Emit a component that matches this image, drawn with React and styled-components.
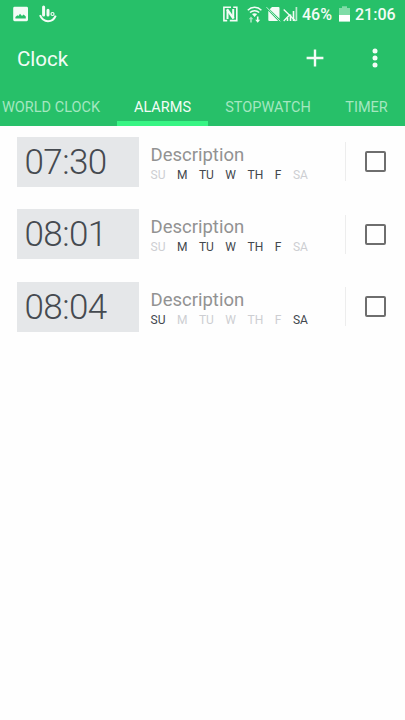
import styled, { createGlobalStyle } from "styled-components";

const GlobalStyle = createGlobalStyle`
  * {
    box-sizing: border-box;
  }

  body {
    margin: 0;
    background-color: #fefefe;
    font-family: Roboto, sans-serif;
  }
`;

const Screen = styled.div`
  width: 405px;
  height: 720px;
  overflow: hidden;
  background-color: #fefefe;
`;

const Header = styled.header`
  height: 125.5px;
  background-color: #27c069;
  color: #f3fcf6;
`;

const StatusBar = styled.div`
  display: flex;
  align-items: center;
  height: 28px;
  padding: 0 9px 0 13px;
`;

const StatusIcon = styled.svg`
  display: block;
  flex: none;
  margin-left: ${({ $gap }) => $gap || 0}px;
`;

const StatusText = styled.span`
  flex: none;
  width: ${({ $width }) => $width}px;
  margin-left: ${({ $gap }) => $gap}px;
  padding-top: 2px;
  font-weight: 500;
  font-size: 16px;
  line-height: 28px;
  white-space: nowrap;
`;

const Spacer = styled.div`
  flex: 1;
`;

const Toolbar = styled.div`
  display: flex;
  align-items: center;
  height: 61px;
  padding: 0 20px 0 17px;
`;

const Title = styled.h1`
  flex: 1;
  margin: 0;
  font-weight: 400;
  font-size: 20.5px;
  line-height: 24px;
`;

const ToolbarButton = styled.button`
  display: flex;
  justify-content: center;
  width: 20px;
  margin-left: ${({ $gap }) => $gap || 0}px;
  padding: 0 0 2px;
  border: none;
  background: none;
  color: inherit;
`;

const Tabs = styled.nav`
  display: flex;
  height: 36.5px;
  margin-left: -15px;
`;

const Tab = styled.div`
  display: flex;
  flex: none;
  justify-content: center;
  width: ${({ $width }) => $width}px;
  padding-top: 10px;
  border-bottom: 5px solid ${({ $active }) => ($active ? "#38f584" : "transparent")};
  color: ${({ $active }) => ($active ? "#f3fcf6" : "#a4e7c0")};
  font-size: 14.5px;
  line-height: 18px;
  white-space: nowrap;
`;

const AlarmList = styled.ul`
  margin: 0;
  padding: 11px 0 0;
  list-style: none;
`;

const AlarmItem = styled.li`
  display: flex;
  height: 72.5px;
  padding: 0 19px 0 17px;
`;

const TimeBox = styled.div`
  width: 122px;
  height: 50px;
  padding: 1px 0 0 7.5px;
  background-color: #e5e7e9;
  color: #454a50;
  font-weight: 300;
  font-size: 35px;
  line-height: 50px;
  letter-spacing: -0.6px;
`;

const Info = styled.div`
  flex: 1;
  padding: 7px 0 0 11.5px;
`;

const Description = styled.div`
  color: #929292;
  font-size: 18.5px;
  line-height: 22px;
`;

const Days = styled.div`
  display: flex;
  gap: 11.5px;
  margin-top: 2px;
`;

const Day = styled.span`
  color: ${({ $on }) => ($on ? "#42474d" : "#cdced2")};
  font-size: 12px;
  line-height: 14px;
`;

const Divider = styled.div`
  width: 1px;
  height: 39px;
  margin: 5.5px 19px 0 0;
  background-color: #ededed;
`;

const Checkbox = styled.div`
  width: 21px;
  height: 21px;
  margin-top: 14.5px;
  border: 2px solid #6e6e6e;
  border-radius: 2px;
`;

const TABS = [
  { name: "WORLD CLOCK", width: 132 },
  { name: "ALARMS", width: 91, active: true },
  { name: "STOPWATCH", width: 120 },
  { name: "TIMER", width: 77 },
];

const DAYS = ["SU", "M", "TU", "W", "TH", "F", "SA"];
const WEEKDAYS = ["M", "TU", "W", "TH", "F"];

const ALARMS = [
  { time: "07:30", days: WEEKDAYS },
  { time: "08:01", days: WEEKDAYS },
  { time: "08:04", days: ["SU", "SA"] },
];

function Status() {
  return (
    <StatusBar>
      <StatusIcon width="15" height="16" viewBox="0 0 15 16" fill="#f3fcf6">
        <path
          fillRule="evenodd"
          d="M1.6 0.8h12a1.4 1.4 0 0 1 1.4 1.4v11.6a1.4 1.4 0 0 1-1.4 1.4h-12a1.4 1.4 0 0 1-1.4-1.4V2.2a1.4 1.4 0 0 1 1.4-1.4zM2.4 12.4h10.400V10.600L10.600 8.400 9 10 7 7.800 5.400 10 4.400 9.200 2.400 11z"
        />
      </StatusIcon>
      <StatusIcon $gap={11} width="18" height="18" viewBox="0 0 18 18" fill="none" stroke="#f3fcf6">
        <path d="M4.600 2v8M9 5.200v4.800" strokeWidth="3" strokeLinecap="round" />
        <circle cx="13.500" cy="9" r="1.500" strokeWidth="1.200" />
        <path d="M1 10.200c1.600 4 4.400 6 8 6 3.400 0 6.200-1.800 7.700-5.600" strokeWidth="2" />
      </StatusIcon>
      <Spacer />
      <StatusIcon width="16" height="16" viewBox="0 0 16 16" fill="none" stroke="#f3fcf6">
        <path d="M9 1.200H1.900v13.400H5.200M7.800 14.600h7V1.200h-3.600" strokeWidth="1.600" />
        <path d="M5.500 13V4.200M11.200 3v8.800" strokeWidth="2" />
        <path d="M5 3.200L11.600 12.600" strokeWidth="2.400" />
      </StatusIcon>
      <StatusIcon $gap={9} width="15" height="17" viewBox="0 0 15 17" fill="none" stroke="#f3fcf6">
        <path d="M0.800 4.200C4.600 0.400 10.600 0.400 14.400 4.200M3 6.500c2.600-2.500 6.600-2.500 9.200 0" strokeWidth="1.500" />
        <path d="M5 8.100q2.600-1.800 5.200 0L7.600 11z" fill="#f3fcf6" stroke="none" />
        <path d="M4 10.500l-2.300 2.700h1.500v3.300h1.600v-3.300h1.500z" fill="#a9e6c3" stroke="none" />
        <path d="M10.700 16.800l-2.500-3h1.700v-3.300h1.600v3.300h1.700z" fill="#f3fcf6" stroke="none" />
      </StatusIcon>
      <StatusIcon $gap={4} width="15" height="16" viewBox="0 0 15 16">
        <path d="M6 1h6.500a1 1 0 0 1 1 1v10.800L3.700 3.300zM2.300 4.800l9.900 10.200H3.300a1 1 0 0 1-1-1z" fill="#f3fcf6" />
        <path d="M0.500 1.200L14.200 15.300" stroke="#f3fcf6" strokeWidth="0.8" />
      </StatusIcon>
      <StatusIcon $gap={2} width="15" height="16" viewBox="0 0 15 16" stroke="#f3fcf6">
        <path d="M4.500 11.500V15M7.500 8.500V15M10.500 5V15" strokeWidth="1.600" />
        <path d="M13.400 1V15" strokeWidth="1.700" stroke="#bcebcf" />
        <path d="M0.700 3.500L12.500 15M0.700 15L7 8.500" strokeWidth="1.300" />
      </StatusIcon>
      <StatusText $gap={4} $width={30}>
        46%
      </StatusText>
      <StatusIcon $gap={7} width="11" height="16" viewBox="0 0 11 16">
        <path d="M3 0.300h5V2h3v7H0V2h3z" fill="#7fdca7" />
        <path d="M0 9h11v6.600H0z" fill="#fff" />
      </StatusIcon>
      <StatusText $gap={5} $width={41}>
        21:06
      </StatusText>
    </StatusBar>
  );
}

export default function App() {
  return (
    <Screen>
      <GlobalStyle />
      <Header>
        <Status />
        <Toolbar>
          <Title>Clock</Title>
          <ToolbarButton aria-label="Add alarm">
            <svg width="18" height="18" viewBox="0 0 18 18" stroke="currentColor" strokeWidth="2.4">
              <path d="M9 0.600v16.800M0.600 9h16.800" />
            </svg>
          </ToolbarButton>
          <ToolbarButton $gap={40} aria-label="More options">
            <svg width="6" height="20" viewBox="0 0 6 20" fill="currentColor">
              <circle cx="3" cy="3" r="2.5" />
              <circle cx="3" cy="10" r="2.5" />
              <circle cx="3" cy="17" r="2.5" />
            </svg>
          </ToolbarButton>
        </Toolbar>
        <Tabs>
          {TABS.map(({ name, width, active }) => (
            <Tab key={name} $width={width} $active={active}>
              {name}
            </Tab>
          ))}
        </Tabs>
      </Header>

      <AlarmList>
        {ALARMS.map(({ time, days }) => (
          <AlarmItem key={time}>
            <TimeBox>{time}</TimeBox>
            <Info>
              <Description>Description</Description>
              <Days>
                {DAYS.map((day) => (
                  <Day key={day} $on={days.includes(day)}>
                    {day}
                  </Day>
                ))}
              </Days>
            </Info>
            <Divider />
            <Checkbox />
          </AlarmItem>
        ))}
      </AlarmList>
    </Screen>
  );
}
